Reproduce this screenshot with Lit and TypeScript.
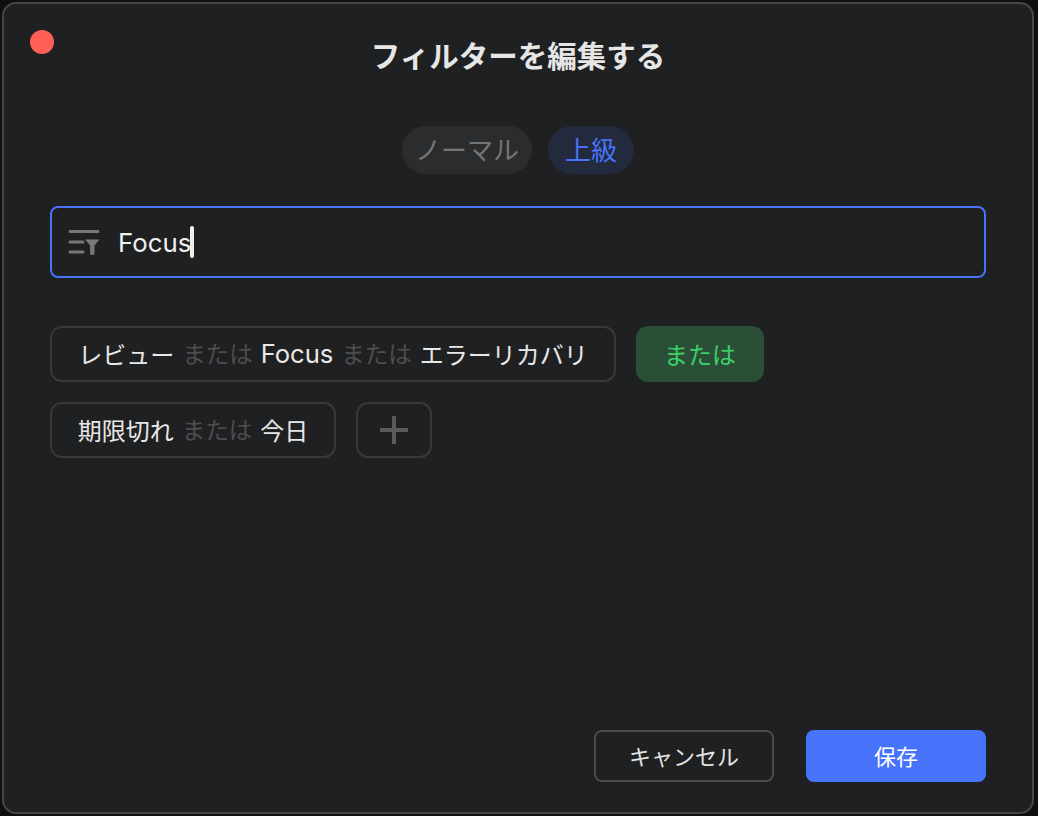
import { LitElement, html, css } from "lit";
import { customElement } from "lit/decorators.js";

@customElement("app-root")
export class AppRoot extends LitElement {
  static styles = css`
    :host {
      display: block;
      width: 1038px;
      height: 816px;
      padding: 2px 4px 2px 2px;
      box-sizing: border-box;
      background: #0f0f10;
      font-family: Inter, "Noto Sans CJK JP", sans-serif;
      color: #f0f0f0;
    }
    .win {
      box-sizing: border-box;
      position: relative;
      width: 1032px;
      height: 812px;
      border: 2px solid #464648;
      border-radius: 14px;
      background: #1f2022;
      display: flex;
      flex-direction: column;
      padding: 0 46px 30px 46px;
    }
    .close {
      position: absolute;
      left: 26px;
      top: 26px;
      width: 24px;
      height: 24px;
      border-radius: 50%;
      background: #ff5f57;
    }
    .title {
      margin-top: 30px;
      height: 44px;
      line-height: 44px;
      text-align: center;
      font-size: 29.5px;
      font-weight: 600;
      color: #e6e6e6;
    }
    .tabs {
      margin-top: 48px;
      display: flex;
      justify-content: center;
      gap: 16px;
    }
    .tab {
      height: 48px;
      line-height: 50px;
      border-radius: 24px;
      font-size: 26px;
      text-align: center;
    }
    .tab.normal {
      width: 130px;
      background: #2b2c2e;
      color: #747577;
    }
    .tab.adv {
      width: 86px;
      background: #232a3d;
      color: #4772fa;
    }
    .input {
      box-sizing: border-box;
      margin-top: 32px;
      height: 72px;
      border: 2px solid #4772fa;
      border-radius: 8px;
      display: flex;
      align-items: center;
      padding-left: 16px;
      font-size: 25.8px;
      color: #f0f0f0;
    }
    .input svg {
      width: 32px;
      height: 32px;
      flex: none;
    }
    .input .val {
      margin-left: 18px;
      padding-top: 1px;
    }
    .caret {
      width: 4px;
      height: 32px;
      border-radius: 2px;
      background: #f0f0f0;
      margin-left: -1px;
    }
    .rows {
      margin-top: 48px;
      display: flex;
      flex-direction: column;
      gap: 20px;
    }
    .row {
      display: flex;
      gap: 20px;
    }
    .chip {
      box-sizing: border-box;
      height: 56px;
      border: 2px solid #38393b;
      border-radius: 12px;
      padding-bottom: 2px;
      display: flex;
      align-items: center;
      justify-content: center;
      gap: 8px;
      font-size: 24px;
      color: #e8e8e8;
      white-space: nowrap;
    }
    .chip .or {
      color: #4c4d4f;
      font-size: 23.5px;
    }
    .chip .latin {
      font-size: 25.6px;
    }
    .c1 { width: 566px; }
    .c2 { width: 286px; }
    .orbtn {
      box-sizing: border-box;
      width: 128px;
      height: 56px;
      padding-bottom: 2px;
      border-radius: 12px;
      background: #2b4f36;
      color: #3ccf69;
      font-size: 24px;
      display: flex;
      align-items: center;
      justify-content: center;
    }
    .add {
      width: 76px;
      padding-bottom: 0;
    }
    .add svg {
      width: 28px;
      height: 28px;
    }
    .footer {
      margin-top: auto;
      display: flex;
      justify-content: flex-end;
      gap: 32px;
    }
    .btn {
      box-sizing: border-box;
      width: 180px;
      height: 52px;
      padding-bottom: 2px;
      border-radius: 8px;
      font-size: 22px;
      display: flex;
      align-items: center;
      justify-content: center;
    }
    .cancel {
      border: 2px solid #4a4b4d;
      color: #e4e4e4;
    }
    .save {
      background: #4772fa;
      color: #fff;
    }
  `;

  render() {
    return html`
      <div class="win">
        <div class="close"></div>
        <div class="title">フィルターを編集する</div>
        <div class="tabs">
          <div class="tab normal">ノーマル</div>
          <div class="tab adv">上級</div>
        </div>
        <div class="input">
          <svg viewBox="0 0 32 32" fill="none">
            <path d="M2 5.5h28M2 16h13M2 26h13" stroke="#78787a" stroke-width="3" stroke-linecap="round"/>
            <path d="M17 13.5h14.5l-5 6v8q0 1.5-2.2 1.5t-2.2-1.5v-8z" fill="#78787a"/>
          </svg>
          <span class="val">Focus</span><span class="caret"></span>
        </div>
        <div class="rows">
          <div class="row">
            <div class="chip c1">
              <span>レビュー</span><span class="or">または</span><span class="latin">Focus</span><span class="or">または</span><span>エラーリカバリ</span>
            </div>
            <div class="orbtn">または</div>
          </div>
          <div class="row">
            <div class="chip c2">
              <span>期限切れ</span><span class="or">または</span><span>今日</span>
            </div>
            <div class="chip add">
              <svg viewBox="0 0 28 28" fill="none">
                <path d="M14 1v26M1 14h26" stroke="#5a5a5c" stroke-width="4" stroke-linecap="round"/>
              </svg>
            </div>
          </div>
        </div>
        <div class="footer">
          <div class="btn cancel">キャンセル</div>
          <div class="btn save">保存</div>
        </div>
      </div>
    `;
  }
}
